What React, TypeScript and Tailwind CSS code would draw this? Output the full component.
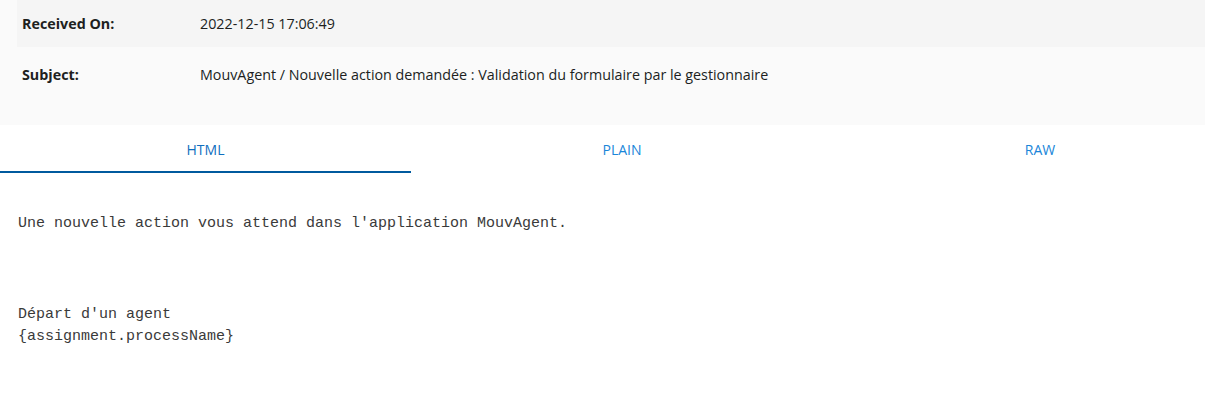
export default function App() {
  const tabs = [
    { label: "HTML", width: "w-[411px]", active: true },
    { label: "PLAIN", width: "w-[422px]", active: false },
    { label: "RAW", width: "w-[414px]", active: false },
  ];

  return (
    <div className="w-[1205px] h-[409px] overflow-hidden bg-white text-[#201f1e] font-['Open_Sans',sans-serif]">
      <div className="bg-[#fafafa] h-[125px]">
        <div className="ml-[17px] h-[47px] flex items-center bg-[#f5f5f5] text-[14.3px]">
          <div className="w-[183px] pl-[5px] font-bold">Received On:</div>
          <div>2022-12-15 17:06:49</div>
        </div>
        <div className="ml-[17px] h-[56px] flex items-center text-[14.3px]">
          <div className="w-[183px] pl-[5px] font-bold">Subject:</div>
          <div>MouvAgent / Nouvelle action demandée : Validation du formulaire par le gestionnaire</div>
        </div>
      </div>

      <div className="flex h-[48px] w-[1247px]">
        {tabs.map((t) => (
          <div
            key={t.label}
            className={`${t.width} shrink-0 flex items-center justify-center pt-[3px] text-[14px] ${
              t.active ? "text-[#106ebe] border-b-2 border-[#005a9e]" : "text-[#1a86d9] border-b-2 border-transparent"
            }`}
          >
            {t.label}
          </div>
        ))}
      </div>

      <div className="px-[18px] pt-[40px] font-['Liberation_Mono',monospace] text-[15px] leading-[22px] text-[#3a3a3a]">
        <p>Une nouvelle action vous attend dans l'application MouvAgent.</p>
        <p className="mt-[69px]">Départ d'un agent</p>
        <p>{"{assignment.processName}"}</p>
      </div>
    </div>
  );
}
